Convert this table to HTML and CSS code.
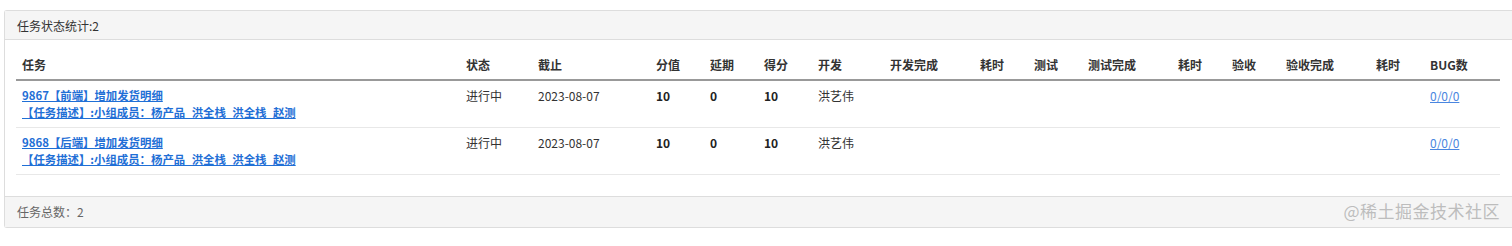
FILE: index.html
```html
<!DOCTYPE html>
<html lang="zh">
<head>
<meta charset="utf-8">
<title>任务状态统计</title>
<link rel="stylesheet" href="styles.css">
</head>
<body>
<div class="page">
  <div class="panel">
    <div class="panel-heading">任务状态统计:2</div>
    <div class="panel-body">
      <table class="tasks">
        <colgroup>
          <col class="c-task"><col class="c72"><col class="c118"><col class="c54"><col class="c54"><col class="c54"><col class="c72"><col class="c90"><col class="c54"><col class="c54"><col class="c90"><col class="c54"><col class="c54"><col class="c90"><col class="c54"><col class="c-bug">
        </colgroup>
        <thead>
          <tr>
            <th>任务</th><th>状态</th><th>截止</th><th>分值</th><th>延期</th><th>得分</th><th>开发</th><th>开发完成</th><th>耗时</th><th>测试</th><th>测试完成</th><th>耗时</th><th>验收</th><th>验收完成</th><th>耗时</th><th>BUG数</th>
          </tr>
        </thead>
        <tbody>
          <tr>
            <td class="task-cell"><a class="task-link" href="#">9867【前端】增加发货明细<br>【任务描述】:小组成员：杨产品_洪全栈_洪全栈_赵测</a></td>
            <td>进行中</td><td>2023-08-07</td><td class="num">10</td><td class="num">0</td><td class="num">10</td><td>洪艺伟</td><td></td><td></td><td></td><td></td><td></td><td></td><td></td><td></td><td><a class="bug-link" href="#">0/0/0</a></td>
          </tr>
          <tr>
            <td class="task-cell"><a class="task-link" href="#">9868【后端】增加发货明细<br>【任务描述】:小组成员：杨产品_洪全栈_洪全栈_赵测</a></td>
            <td>进行中</td><td>2023-08-07</td><td class="num">10</td><td class="num">0</td><td class="num">10</td><td>洪艺伟</td><td></td><td></td><td></td><td></td><td></td><td></td><td></td><td></td><td><a class="bug-link" href="#">0/0/0</a></td>
          </tr>
        </tbody>
      </table>
    </div>
    <div class="panel-footer">任务总数：2</div>
  </div>
  <div class="watermark">@稀土掘金技术社区</div>
</div>
</body>
</html>
```
FILE: styles.css
```css
html, body {
  margin: 0;
  padding: 0;
  background: #fff;
}
body {
  font-family: "Noto Sans CJK SC", "Noto Sans", sans-serif;
  font-size: 12px;
  line-height: 17px;
  color: #333;
}
.page {
  position: relative;
  padding: 10px 0 0 4px;
  height: 236px;
}
.panel {
  border: 1px solid #ddd;
  border-right: none;
  border-radius: 3px 0 0 3px;
  background: #fff;
}
.panel-heading {
  background: #f5f5f5;
  border-bottom: 1px solid #ddd;
  padding: 6px 12px 5px;
  color: #333;
}
.panel-body {
  padding: 10px 11px 21px;
}
.tasks {
  width: 1484px;
  border-collapse: collapse;
  table-layout: fixed;
}
.c-task { width: 444px; }
.c72 { width: 72px; }
.c118 { width: 118px; }
.c54 { width: 54px; }
.c90 { width: 90px; }
.c-bug { width: 76px; }
.tasks th {
  text-align: left;
  font-weight: bold;
  padding: 6px 6px 6px;
  border-bottom: 2px solid #999;
  white-space: nowrap;
}
.tasks td {
  text-align: left;
  vertical-align: top;
  padding: 6px 6px 6px;
  border-bottom: 1px solid #e8e8e8;
  white-space: nowrap;
}
.tasks td.task-cell {
  font-size: 11.4px;
  line-height: 17px;
}
.tasks td.num {
  font-weight: bold;
  color: #222;
}
.task-link {
  color: #1f6fd6;
  font-weight: bold;
  text-decoration: underline;
}
.bug-link {
  color: #4a86e0;
  text-decoration: underline;
}
.panel-footer {
  background: #f5f5f5;
  border-top: 1px solid #ddd;
  padding: 6px 12px 7px;
  color: #666;
}
.watermark {
  position: absolute;
  right: 12px;
  top: 200px;
  font-size: 17px;
  line-height: 22px;
  color: #bdbdbd;
  letter-spacing: 0.5px;
}
```
